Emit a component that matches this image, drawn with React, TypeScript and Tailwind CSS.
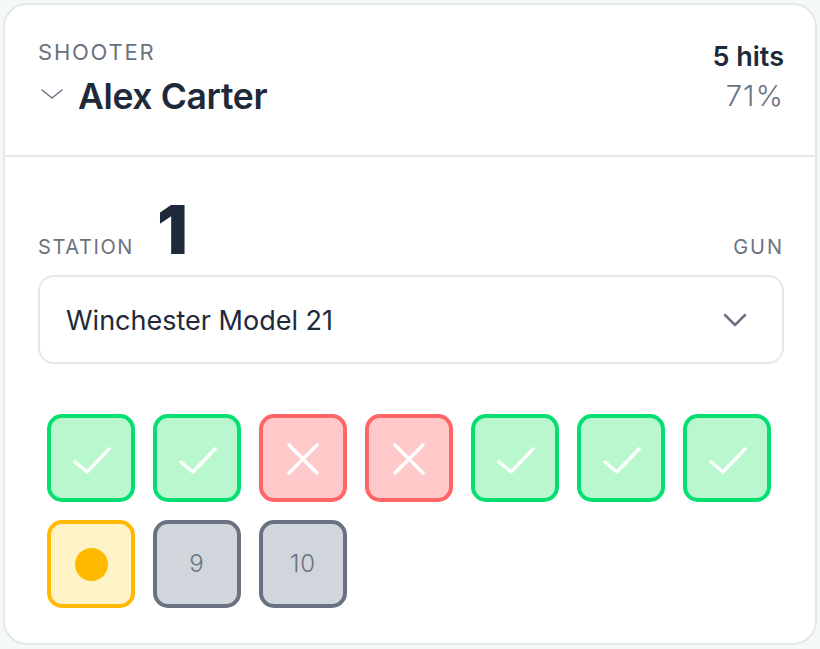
import React from "react";

type Status = "hit" | "miss" | "current" | "pending";

const shots: { s: Status; n: number }[] = [
  { s: "hit", n: 1 },
  { s: "hit", n: 2 },
  { s: "miss", n: 3 },
  { s: "miss", n: 4 },
  { s: "hit", n: 5 },
  { s: "hit", n: 6 },
  { s: "hit", n: 7 },
  { s: "current", n: 8 },
  { s: "pending", n: 9 },
  { s: "pending", n: 10 },
];

function CheckIcon() {
  return (
    <svg width="38" height="28" viewBox="0 0 38 28" fill="none" className="mt-[5px] ml-[2px]">
      <path d="M2 15 L14 25 L36 2" stroke="white" strokeWidth="3.5" strokeLinecap="round" strokeLinejoin="round" />
    </svg>
  );
}

function XIcon() {
  return (
    <svg width="32" height="32" viewBox="0 0 32 32" fill="none" className="mt-[2px]">
      <path d="M2 2 L30 30 M30 2 L2 30" stroke="white" strokeWidth="3.5" strokeLinecap="round" />
    </svg>
  );
}

function Shot({ s, n }: { s: Status; n: number }) {
  if (s === "hit")
    return (
      <div className="w-[88px] h-[88px] rounded-[15px] border-[4px] border-[#05df72] bg-[#b9f8cf] flex items-center justify-center">
        <CheckIcon />
      </div>
    );
  if (s === "miss")
    return (
      <div className="w-[88px] h-[88px] rounded-[15px] border-[4px] border-[#ff6467] bg-[#ffc9c9] flex items-center justify-center">
        <XIcon />
      </div>
    );
  if (s === "current")
    return (
      <div className="w-[88px] h-[88px] rounded-[15px] border-[4px] border-[#ffb900] bg-[#fef3c6] flex items-center justify-center">
        <div className="w-[33px] h-[33px] rounded-full bg-[#ffb900]" />
      </div>
    );
  return (
    <div className="w-[88px] h-[88px] rounded-[15px] border-[4px] border-[#6a7282] bg-[#d1d5dc] flex items-center justify-center text-[24px] font-light tracking-[0.04em] text-[#6a7282]">
      {n}
    </div>
  );
}

export default function App() {
  return (
    <div
      className="w-[820px] h-[649px] bg-[#f3f9f5] p-[3px]"
      style={{ fontFamily: "Inter, 'Noto Sans', sans-serif" }}
    >
      <div className="w-[814px] h-[642px] rounded-[24px] border-[2px] border-[#e5e7eb] bg-white overflow-hidden">
        <div className="flex justify-between pl-[33px] pr-[31px] pt-[33px] pb-[37px] border-b-[2px] border-[#e5e7eb]">
          <div className="flex flex-col">
            <div className="text-[22px] leading-[28px] tracking-[0.08em] text-[#6a7282]">SHOOTER</div>
            <div className="flex items-center mt-[10px]">
              <svg width="22" height="12" viewBox="0 0 22 12" fill="none" className="ml-[3px] mr-[15px] -mt-[6px]">
                <path d="M1 2 L11 10 L21 2" stroke="#6a7282" strokeWidth="1.5" strokeLinecap="round" strokeLinejoin="round" />
              </svg>
              <div className="text-[35.5px] leading-[42px] font-semibold text-[#1e2939] tracking-[-0.01em]">Alex Carter</div>
            </div>
          </div>
          <div className="flex flex-col items-end pt-[3px]">
            <div className="text-[27px] leading-[32px] font-semibold text-[#1e2939]">5 hits</div>
            <div className="text-[29px] leading-[34px] font-light text-[#6a7282] mt-[6px] tracking-[0.04em]">71%</div>
          </div>
        </div>

        <div className="pl-[33px] pr-[31px] pt-[39px]">
          <div className="flex items-baseline justify-between">
            <div className="flex items-baseline">
              <span className="text-[20px] tracking-[0.08em] text-[#6a7282]">STATION</span>
              <span className="text-[68px] leading-[66px] font-black text-[#1e2939] ml-[23px]">1</span>
            </div>
            <span className="text-[20px] tracking-[0.1em] text-[#6a7282]">GUN</span>
          </div>

          <div className="mt-[13px] h-[89px] rounded-[16px] border-[2px] border-[#e5e7eb] flex items-center justify-between pl-[26px] pr-[35px]">
            <span className="text-[27px] text-[#1e2939] pt-[4px]">Winchester Model 21</span>
            <svg width="24" height="14" viewBox="0 0 24 14" fill="none">
              <path d="M2 2 L12 12 L22 2" stroke="#6a7282" strokeWidth="2.5" strokeLinecap="round" strokeLinejoin="round" />
            </svg>
          </div>

          <div className="mt-[50px] px-[9px] grid grid-cols-[repeat(7,88px)] gap-[18px]">
            {shots.map((x) => (
              <Shot key={x.n} s={x.s} n={x.n} />
            ))}
          </div>
        </div>
      </div>
    </div>
  );
}
